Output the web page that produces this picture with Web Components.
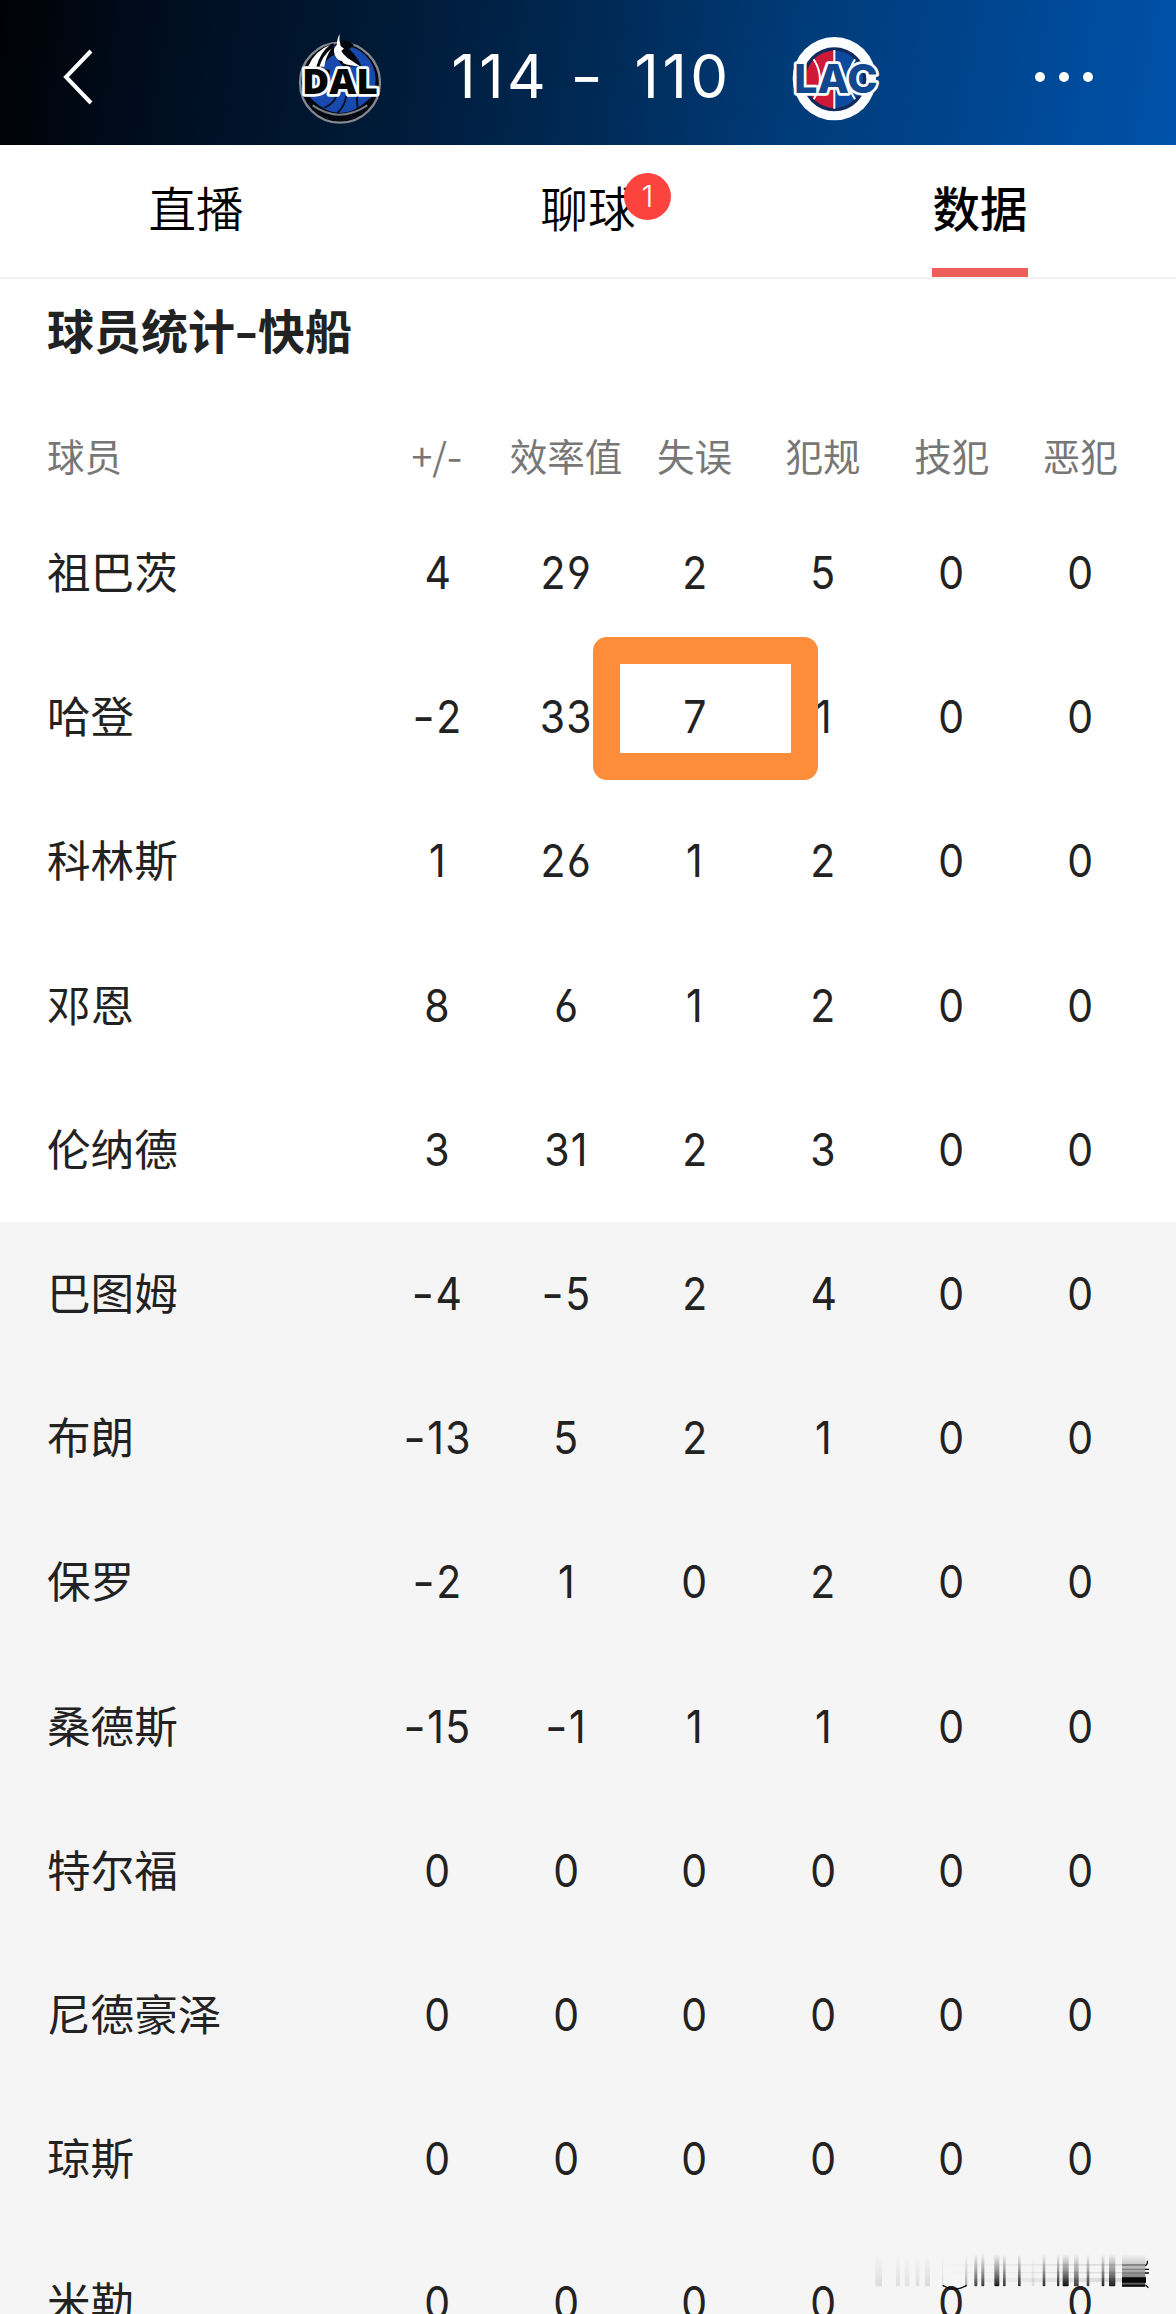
<!DOCTYPE html>
<html lang="zh-CN">
<head>
<meta charset="UTF-8">
<title>球员统计</title>
<style>
    body {
        margin: 0;
        background: #fff;
        font-family: "Noto Sans CJK SC", sans-serif;
    }
</style>
</head>
<body>
<stats-page></stats-page>

<script>
class TeamLogo extends HTMLElement {
    connectedCallback() {
        const art = {
            DAL: `
                <circle cx="180" cy="188" r="120" fill="#05090f" stroke="#84898f" stroke-width="7"/>
                <circle cx="182" cy="180" r="105" fill="#1749ae"/>
                <path d="M78 152Q95 92 160 70L164 104Q140 112 126 146L150 150L148 172H70Z" fill="#03060c"/>
                <path d="M84 140Q104 92 150 75Q122 96 109 140ZM118 140Q128 106 154 86Q137 110 133 140Z" fill="#fff"/>
                <path d="M180 62Q205 58 222 76L208 88Q232 110 244 138L190 140Q164 118 166 76Z" fill="#03060c"/>
                <path d="M179 42Q176 62 182 78L192 86L184 92Q190 106 212 120L240 139Q208 138 190 130L186 123L176 121Q160 106 162 87Q168 77 171 73Q170 59 179 42Z" fill="#fff"/>
                <path d="M92 234Q180 318 270 234Q253 290 180 292Q111 290 92 234Z" fill="#03060c"/>
                <path d="M98 240Q180 318 264 240V222H98Z" fill="#1749ae"/>
                <path d="M98 256Q177 312 262 256" fill="none" stroke="#777d85" stroke-width="6"/>
                <path d="M133 263Q162 252 170 225M172 279Q196 257 199 225M234 266Q230 250 231 225" fill="none" stroke="#071126" stroke-width="6"/>
                <text x="66" y="223" font-family="Open Sans" font-size="107" font-weight="800" textLength="228" lengthAdjust="spacingAndGlyphs" fill="#050607" stroke="#fff" stroke-width="16" stroke-linejoin="round" paint-order="stroke">DAL</text>`,
            LAC: `
                <circle cx="178" cy="176" r="125" fill="#fbfdff"/>
                <circle cx="178" cy="178" r="96" fill="#102a5c"/>
                <path d="M178 92A86 86 0 0 0 178 264Z" fill="#ce1938"/>
                <path d="M178 92A86 86 0 0 1 178 264Z" fill="#0b4a9e"/>
                <path d="M178 90V266M116 118Q154 178 116 238M240 118Q202 178 240 238" fill="none" stroke="#fff" stroke-width="6"/>
                <text x="58" y="219" font-family="Inter" font-size="118" font-weight="800" textLength="250" lengthAdjust="spacingAndGlyphs" fill="#10478f" stroke="#fbfdff" stroke-width="16" stroke-linejoin="round" paint-order="stroke">LAC</text>`
        };
        this.attachShadow({ mode: 'open' });
        this.shadowRoot.innerHTML = `
            <style>
                :host { display: block; width: 120px; height: 120px; }
                svg { display: block; }
            </style>
            <svg width="120" height="120" viewBox="0 0 360 360">${art[this.getAttribute('team')]}</svg>
        `;
    }
}

class MatchHeader extends HTMLElement {
    connectedCallback() {
        this.attachShadow({ mode: 'open' });
        this.shadowRoot.innerHTML = `
            <style>
                :host {
                    display: grid;
                    grid-template-columns: 280px 120px 375px 120px 1fr;
                    align-items: center;
                    height: 145px;
                    padding-top: 15px;
                    box-sizing: border-box;
                    background: linear-gradient(99deg, #000205 0%, #000e21 15%, #001a37 33%, #002954 50%, #003b78 67%, #00458f 83%, #0052ab 100%);
                    color: #fff;
                }
                .back { display: block; margin: -6px 0 0 60px; }
                .score {
                    display: flex;
                    justify-content: center;
                    gap: 30px;
                    font: 400 60px/1 Inter, sans-serif;
                    letter-spacing: 3.5px;
                    margin: -8px 0 0 8px;
                }
                .score .dash { margin-left: -6px; transform: scaleX(1.2); }
                .more {
                    display: flex;
                    justify-content: flex-end;
                    gap: 14px;
                    margin: -7px 83px 0 0;
                }
                .more i { width: 10px; height: 10px; border-radius: 50%; background: #fff; }
            </style>
            <svg class="back" width="36" height="60" viewBox="0 0 36 60">
                <path d="M31 4L6 30L31 56" fill="none" stroke="#fff" stroke-width="4"/>
            </svg>
            <team-logo team="DAL"></team-logo>
            <div class="score"><span>114</span><span class="dash">-</span><span>110</span></div>
            <team-logo team="LAC"></team-logo>
            <div class="more"><i></i><i></i><i></i></div>
        `;
    }
}

class TabItem extends HTMLElement {
    connectedCallback() {
        const badge = this.getAttribute('badge');
        this.attachShadow({ mode: 'open' });
        this.shadowRoot.innerHTML = `
            <style>
                :host {
                    flex: 1;
                    display: flex;
                    justify-content: center;
                    font-size: 47.5px;
                    font-weight: 350;
                    line-height: 123px;
                    color: #000;
                }
                :host([active]) { font-weight: 500; }
                .label { position: relative; width: 96px; text-align: center; white-space: nowrap; }
                :host([active]) .label { box-shadow: inset 0 -9px #ed5f58; }
                .badge {
                    position: absolute;
                    left: 84px;
                    top: 28px;
                    width: 47px;
                    height: 47px;
                    border-radius: 50%;
                    background: #fd433e;
                    color: #fff;
                    font: 300 30px/46px Inter, sans-serif;
                }
            </style>
            <div class="label"><slot></slot>${badge ? `<span class="badge">${badge}</span>` : ''}</div>
        `;
    }
}

class TabBar extends HTMLElement {
    connectedCallback() {
        this.attachShadow({ mode: 'open' });
        this.shadowRoot.innerHTML = `
            <style>
                :host {
                    display: flex;
                    height: 132px;
                    border-bottom: 2px solid #f2f2f2;
                    box-sizing: content-box;
                }
                ::slotted(tab-item) { height: 132px; }
            </style>
            <slot></slot>
        `;
    }
}

class StatRow extends HTMLElement {
    connectedCallback() {
        const [name, ...values] = this.getAttribute('cells').split(',');
        const mark = this.hasAttribute('mark');
        this.attachShadow({ mode: 'open' });
        this.shadowRoot.innerHTML = `
            <style>
                :host {
                    display: grid;
                    grid-template-columns: 326px repeat(6, 128.6px);
                    align-items: center;
                    height: 144.2px;
                    padding-left: 47px;
                    font-size: 43.6px;
                    color: #222;
                }
                :host([bench]) { background: #f5f5f5; }
                :host([head]) { height: 86px; font-size: 37.5px; color: #777; }
                .name { line-height: 60px; margin-top: -6px; }
                .cell { position: relative; text-align: center; white-space: nowrap; line-height: 60px; margin-top: -3px; }
                .cell span { display: inline-block; }
                :host(:not([head])) .cell span {
                    font-family: Inter, sans-serif;
                    font-size: 45px;
                    font-feature-settings: "cv03", "cv04";
                    letter-spacing: 1.5px;
                    margin-right: -1.5px;
                    transform: scaleX(.91);
                }
                .cell b { display: inline-block; font-weight: 400; margin: 0 2px 0 1px; transform: scaleX(1.2); }
                :host([head]) .cell, :host([head]) .name { margin-top: -6px; }
                .frame {
                    position: absolute;
                    left: -37px;
                    top: -47px;
                    width: 225px;
                    height: 143px;
                    box-sizing: border-box;
                    border: 27px solid #fd8d3a;
                    border-radius: 14px;
                    z-index: 1;
                }
            </style>
            <div class="name">${name}</div>
            ${values.map((v, i) => `<div class="cell"><span>${v.replace('-', '<b>-</b>')}</span>${mark && i === 2 ? '<div class="frame"></div>' : ''}</div>`).join('')}
        `;
    }
}

// Smeared strip in the lower right corner
class SmearStrip extends HTMLElement {
    connectedCallback() {
        // x, width, opacity
        const bars = [
            [106, 20, .10], [168, 12, .09], [194, 14, .08], [227, 11, .09], [255, 15, .11],
            [306, 4, .1], [375, 7, .28], [403, 9, .75], [424, 9, .78], [463, 15, .9],
            [489, 8, .8], [534, 8, .82], [575, 8, .1], [608, 8, .82], [651, 7, .85],
            [668, 18, .95], [702, 14, .75], [740, 8, .75], [785, 8, .85], [807, 19, .9]
        ];
        this.attachShadow({ mode: 'open' });
        this.shadowRoot.innerHTML = `
            <style>
                :host { display: block; position: absolute; right: 0; bottom: 0; }
                svg { display: block; }
            </style>
            <svg width="336" height="100" viewBox="0 0 1008 300">
                <defs>
                    <linearGradient id="fade" x1="0" y1="0" x2="0" y2="1">
                        <stop offset="0" stop-color="#111" stop-opacity="0"/>
                        <stop offset=".5" stop-color="#111" stop-opacity=".45"/>
                        <stop offset="1" stop-color="#000"/>
                    </linearGradient>
                    <linearGradient id="side">
                        <stop offset="0" stop-color="#999" stop-opacity="0"/>
                        <stop offset="1" stop-color="#999" stop-opacity=".3"/>
                    </linearGradient>
                </defs>
                <path d="M300 150H848V155H300ZM300 174H848V178H300ZM400 192H848V204H400Z" fill="url(#side)"/>
                ${bars.map(([x, w, o]) => `<rect x="${x}" y="120" width="${w}" height="97" rx="3" fill="url(#fade)" opacity="${o}"/>`).join('')}
                <rect x="846" y="120" width="70" height="97" fill="url(#fade)" opacity=".7"/>
                <path d="M846 150H916V156H846ZM846 164H916V168H846ZM846 175H916V180H846Z" fill="#777" opacity=".8"/>
                <path d="M846 190H918V206H846ZM846 212H916V218H846Z" fill="#080808"/>
                <path d="M922 140V148L916 156M915 166H927M915 177H927M918 214L925 221" fill="none" stroke="#111" stroke-width="4"/>
                <path d="M308 214Q345 236 380 214" fill="none" stroke="#111" stroke-width="4"/>
            </svg>
        `;
    }
}

class StatsPage extends HTMLElement {
    connectedCallback() {
        const rows = [
            '祖巴茨,4,29,2,5,0,0',
            '哈登,-2,33,7,1,0,0',
            '科林斯,1,26,1,2,0,0',
            '邓恩,8,6,1,2,0,0',
            '伦纳德,3,31,2,3,0,0',
            '巴图姆,-4,-5,2,4,0,0',
            '布朗,-13,5,2,1,0,0',
            '保罗,-2,1,0,2,0,0',
            '桑德斯,-15,-1,1,1,0,0',
            '特尔福,0,0,0,0,0,0',
            '尼德豪泽,0,0,0,0,0,0',
            '琼斯,0,0,0,0,0,0',
            '米勒,0,0,0,0,0,0'
        ];
        this.attachShadow({ mode: 'open' });
        this.shadowRoot.innerHTML = `
            <style>
                :host {
                    display: block;
                    position: relative;
                    width: 1176px;
                    height: 2314px;
                    overflow: hidden;
                    background: #fff;
                }
                h2 {
                    margin: 0;
                    padding: 15px 0 0 47px;
                    height: 121px;
                    font-size: 47px;
                    font-weight: 700;
                    line-height: 70px;
                    color: #222;
                }
                h2 span { display: inline-block; width: 23px; text-align: center; transform: scaleX(1.4); }
            </style>
            <match-header></match-header>
            <tab-bar>
                <tab-item>直播</tab-item>
                <tab-item badge="1">聊球</tab-item>
                <tab-item active>数据</tab-item>
            </tab-bar>
            <h2>球员统计<span>-</span>快船</h2>
            <stat-row head cells="球员,+/-,效率值,失误,犯规,技犯,恶犯"></stat-row>
            ${rows.map((r, i) => `<stat-row cells="${r}"${i > 4 ? ' bench' : ''}${i === 1 ? ' mark' : ''}></stat-row>`).join('')}
            <smear-strip></smear-strip>
        `;
    }
}

customElements.define('team-logo', TeamLogo);
customElements.define('match-header', MatchHeader);
customElements.define('tab-item', TabItem);
customElements.define('tab-bar', TabBar);
customElements.define('stat-row', StatRow);
customElements.define('smear-strip', SmearStrip);
customElements.define('stats-page', StatsPage);
</script>
</body>
</html>
